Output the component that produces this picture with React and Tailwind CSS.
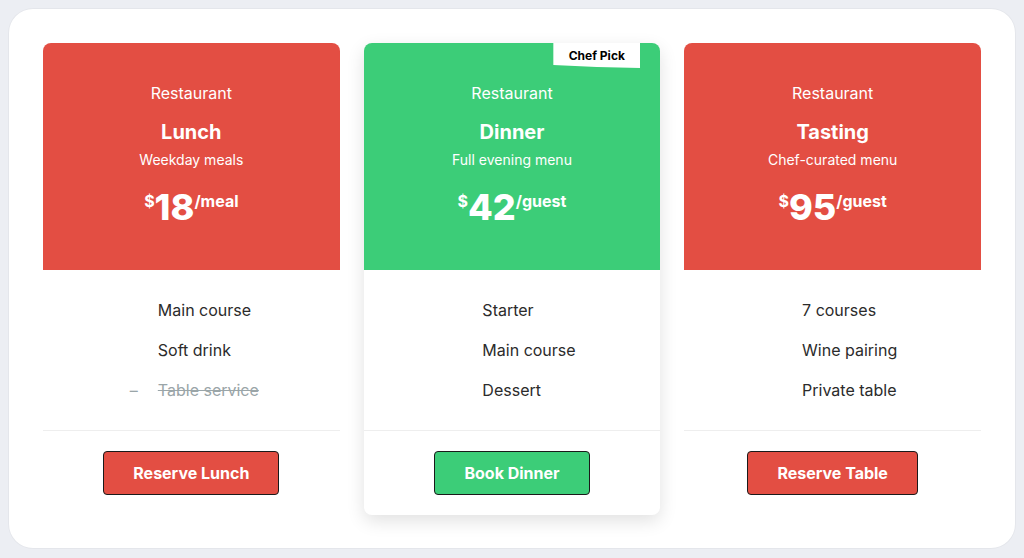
const plans = [
  {
    name: "Lunch",
    desc: "Weekday meals",
    price: "18",
    unit: "/meal",
    features: [
      { text: "Main course", on: true },
      { text: "Soft drink", on: true },
      { text: "Table service", on: false },
    ],
    cta: "Reserve Lunch",
    featured: false,
  },
  {
    name: "Dinner",
    desc: "Full evening menu",
    price: "42",
    unit: "/guest",
    features: [
      { text: "Starter", on: true },
      { text: "Main course", on: true },
      { text: "Dessert", on: true },
    ],
    cta: "Book Dinner",
    featured: true,
  },
  {
    name: "Tasting",
    desc: "Chef-curated menu",
    price: "95",
    unit: "/guest",
    features: [
      { text: "7 courses", on: true },
      { text: "Wine pairing", on: true },
      { text: "Private table", on: true },
    ],
    cta: "Reserve Table",
    featured: false,
  },
]

function PlanCard({ plan }) {
  const accent = plan.featured ? "bg-[#3ccd78]" : "bg-[#e34e43]"
  return (
    <div
      className={`relative flex flex-col rounded-lg bg-white ${
        plan.featured ? "shadow-[0_6px_18px_rgba(0,0,0,0.12)]" : ""
      }`}
    >
      {plan.featured && (
        <div className="absolute right-5 top-0 flex h-[25px] w-[87px] items-center justify-center bg-white text-xs font-bold text-black [clip-path:polygon(0_0,100%_0,100%_100%,50%_96%,0_88%)]">
          Chef Pick
        </div>
      )}

      {/* Header */}
      <div className={`${accent} flex h-[227px] flex-col items-center rounded-t-lg pt-[38px] text-white`}>
        <div className="text-base leading-6">Restaurant</div>
        <div className="mt-[13px] text-xl font-bold leading-7">{plan.name}</div>
        <div className="mt-[4px] text-sm leading-5">{plan.desc}</div>
        <div className="mt-[17px] flex items-start">
          <span className="mt-[6px] text-base font-bold leading-none">$</span>
          <span className="text-4xl font-extrabold leading-10">{plan.price}</span>
          <span className="mt-[6px] text-base font-bold leading-none">{plan.unit}</span>
        </div>
      </div>

      {/* Features */}
      <div className="flex justify-center pb-[28px] pt-[28px]">
        <ul className="flex flex-col gap-4">
          {plan.features.map((f) => (
            <li key={f.text} className="flex items-center gap-[14px] text-base leading-6">
              <span className="w-5 text-center text-[#9aa5a8]">{f.on ? "" : "–"}</span>
              <span className={f.on ? "text-[#2b2b2b]" : "text-[#9aa5a8] line-through"}>{f.text}</span>
            </li>
          ))}
        </ul>
      </div>

      {/* Footer */}
      <div className="flex justify-center border-t border-[#eeeeee] pb-5 pt-5">
        <button className={`${accent} rounded border border-[#1a1a1a] px-[29px] py-[9px] text-base font-bold leading-6 text-white`}>
          {plan.cta}
        </button>
      </div>
    </div>
  )
}

export default function App() {
  return (
    <div className="min-h-screen bg-[#eceef3] p-[9px] font-['Inter',sans-serif]">
      <div className="grid grid-cols-3 gap-6 rounded-3xl bg-white px-[34px] pb-[33px] pt-[34px] shadow-[0_0_0_1px_rgba(0,0,0,0.03)]">
        {plans.map((p) => (
          <PlanCard key={p.name} plan={p} />
        ))}
      </div>
    </div>
  )
}
